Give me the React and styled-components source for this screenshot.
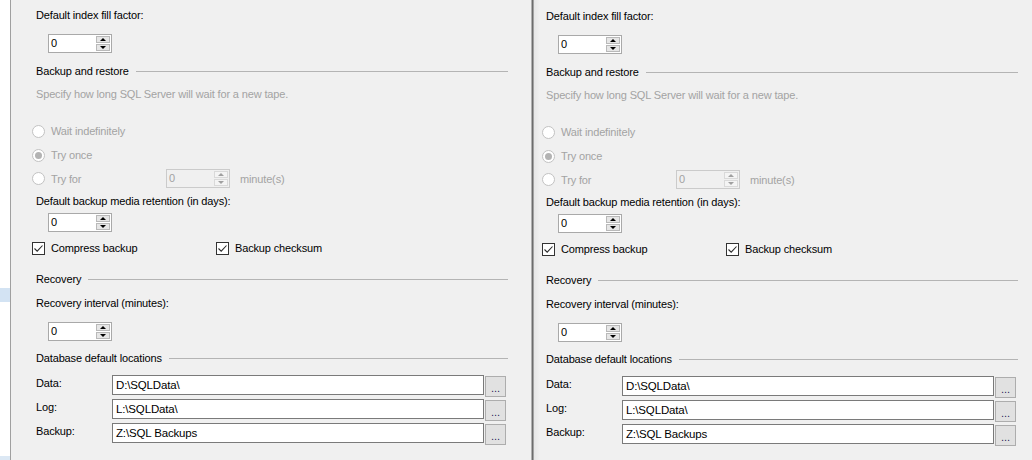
import React from 'react';
import styled, { createGlobalStyle } from 'styled-components';

const Global = createGlobalStyle`
  html, body { margin: 0; padding: 0; background: #f0f0f0; }
  body {
    width: 1032px; height: 460px; overflow: hidden;
    font-family: "Liberation Sans", Arial, sans-serif;
    font-size: 11px; letter-spacing: -0.15px; color: #000;
  }
`;

const Screen = styled.div`
  display: flex;
  width: 1032px;
  height: 460px;
  background: #f0f0f0;
  overflow: hidden;
`;

const LeftPane = styled.div`
  display: flex;
  width: 531px;
  flex: none;
`;

const TreeStrip = styled.div`
  width: 10px;
  flex: none;
  background: #ffffff;
  border-right: 1px solid #a0a0a0;
  display: flex;
  flex-direction: column;
  padding-top: 288px;
`;

const TreeHighlight = styled.div`
  height: ${(p) => p.$h}px;
  background: ${(p) => p.$c || '#d3e3f3'};
  margin-top: ${(p) => (p.$auto ? 'auto' : '0')};
`;

const Divider = styled.div`
  width: 3px;
  flex: none;
  background: linear-gradient(to right, #b0b0b0 0 1px, #6c6c6c 1px 2px, #a2a2a2 2px 3px);
`;

const RightPane = styled.div`
  flex: 1;
  background: linear-gradient(to right, #e6e6e6 0, #f0f0f0 6px);
`;

const Options = styled.div`
  display: flex;
  flex-direction: column;
  width: 472px;
  padding-top: ${(p) => p.$top}px;
  padding-left: ${(p) => p.$left}px;
`;

const Label = styled.div`
  height: 14px;
  line-height: 14px;
  margin-top: ${(p) => p.$mt || 0}px;
  color: ${(p) => (p.$disabled ? '#a3a3a3' : '#000')};
  white-space: nowrap;
`;

const GroupHeader = styled.div`
  display: flex;
  align-items: center;
  gap: 7px;
  height: 14px;
  line-height: 14px;
  margin-top: ${(p) => p.$mt || 0}px;
  white-space: nowrap;
  &::after {
    content: '';
    flex: 1;
    height: 1px;
    background: #b4b4b4;
  }
`;

const SpinRow = styled.div`
  display: flex;
  margin-top: ${(p) => p.$mt || 0}px;
  padding-left: 12px;
`;

const SpinBox = styled.div`
  display: flex;
  width: 64px;
  height: 19px;
  box-sizing: border-box;
  border: 1px solid ${(p) => (p.$disabled ? '#cbcbcb' : '#a9a9a9')};
  background: ${(p) => (p.$disabled ? '#f0f0f0' : '#ffffff')};
  flex: none;
`;

const SpinValue = styled.div`
  flex: 1;
  padding-left: 2px;
  line-height: 17px;
  color: ${(p) => (p.$disabled ? '#a3a3a3' : '#000')};
`;

const SpinButtons = styled.div`
  width: 14px;
  margin: 1px;
  display: flex;
  flex-direction: column;
  gap: 1px;
`;

const SpinBtn = styled.div`
  flex: 1;
  display: flex;
  align-items: center;
  justify-content: center;
  background: ${(p) => (p.$disabled ? '#f4f4f4' : '#e6e6e6')};
  border: 1px solid ${(p) => (p.$disabled ? '#d9d9d9' : '#b9b9b9')};
  box-sizing: border-box;
`;

const Arrow = styled.span`
  width: 0;
  height: 0;
  border-left: 3px solid transparent;
  border-right: 3px solid transparent;
  ${(p) =>
    p.$up
      ? `border-bottom: 3px solid ${p.$disabled ? '#a0a0a0' : '#000'};`
      : `border-top: 3px solid ${p.$disabled ? '#a0a0a0' : '#000'};`}
`;

const ChoiceRow = styled.div`
  display: flex;
  align-items: center;
  height: ${(p) => p.$h || 16}px;
  margin-top: ${(p) => p.$mt || 0}px;
  margin-left: -4px;
  white-space: nowrap;
`;

const Choice = styled.div`
  display: flex;
  align-items: center;
  width: ${(p) => (p.$w ? `${p.$w}px` : 'auto')};
  flex: none;
  color: ${(p) => (p.$disabled ? '#a3a3a3' : '#000')};
`;

const RadioCircle = styled.span`
  width: 13px;
  height: 13px;
  box-sizing: border-box;
  border-radius: 50%;
  border: 1px solid #c2c2c2;
  background: #ffffff;
  margin-right: 6px;
  display: flex;
  align-items: center;
  justify-content: center;
  &::after {
    content: '';
    display: ${(p) => (p.$checked ? 'block' : 'none')};
    width: 7px;
    height: 7px;
    border-radius: 50%;
    background: #b3b3b3;
  }
`;

const CheckSquare = styled.span`
  width: 13px;
  height: 13px;
  box-sizing: border-box;
  border: 1px solid #333333;
  background: #ffffff;
  margin-right: 6px;
  display: flex;
  align-items: center;
  justify-content: center;
`;

const Suffix = styled.span`
  margin-left: 10px;
  color: #a3a3a3;
`;

const PathList = styled.div`
  display: flex;
  flex-direction: column;
  gap: 3px;
  margin-top: 10px;
`;

const PathRow = styled.div`
  display: flex;
  height: 21px;
`;

const PathLabel = styled.div`
  width: 76px;
  flex: none;
  line-height: 14px;
  padding-top: 1px;
`;

const PathBox = styled.div`
  width: 372px;
  height: 20px;
  box-sizing: border-box;
  border: 1px solid #7a7a7a;
  background: #ffffff;
  padding-left: 3px;
  line-height: 18px;
  font-size: 11.5px;
`;

const BrowseButton = styled.div`
  width: 21px;
  height: 21px;
  box-sizing: border-box;
  margin-left: 1px;
  margin-top: 1px;
  border: 1px solid #adadad;
  background: #e1e1e1;
  color: #2d1a5e;
  text-align: center;
  line-height: 22px;
  font-size: 11px;
  letter-spacing: 0;
`;

function Spinner({ value, disabled }) {
  return (
    <SpinBox $disabled={disabled}>
      <SpinValue $disabled={disabled}>{value}</SpinValue>
      <SpinButtons>
        <SpinBtn $disabled={disabled}>
          <Arrow $up $disabled={disabled} />
        </SpinBtn>
        <SpinBtn $disabled={disabled}>
          <Arrow $disabled={disabled} />
        </SpinBtn>
      </SpinButtons>
    </SpinBox>
  );
}

function Check() {
  return (
    <CheckSquare>
      <svg width="11" height="11" viewBox="0 0 11 11">
        <path d="M1.5 5.5 L4.2 8.2 L9.5 2.5" fill="none" stroke="#2b2b2b" strokeWidth="1.1" />
      </svg>
    </CheckSquare>
  );
}

const paths = [
  ['Data:', 'D:\\SQLData\\'],
  ['Log:', 'L:\\SQLData\\'],
  ['Backup:', 'Z:\\SQL Backups'],
];

function ServerOptions({ top, left }) {
  return (
    <Options $top={top} $left={left}>
      <Label>Default index fill factor:</Label>
      <SpinRow $mt={12}>
        <Spinner value="0" />
      </SpinRow>
      <GroupHeader $mt={11}>Backup and restore</GroupHeader>
      <Label $mt={9} $disabled>Specify how long SQL Server will wait for a new tape.</Label>
      <ChoiceRow $mt={22}>
        <Choice $disabled>
          <RadioCircle />
          Wait indefinitely
        </Choice>
      </ChoiceRow>
      <ChoiceRow $mt={8}>
        <Choice $disabled>
          <RadioCircle $checked />
          Try once
        </Choice>
      </ChoiceRow>
      <ChoiceRow $mt={6} $h={19}>
        <Choice $disabled $w={134}>
          <RadioCircle />
          Try for
        </Choice>
        <Spinner value="0" disabled />
        <Suffix>minute(s)</Suffix>
      </ChoiceRow>
      <Label $mt={6}>Default backup media retention (in days):</Label>
      <SpinRow $mt={5}>
        <Spinner value="0" />
      </SpinRow>
      <ChoiceRow $mt={8}>
        <Choice $w={184}>
          <Check />
          Compress backup
        </Choice>
        <Choice>
          <Check />
          Backup checksum
        </Choice>
      </ChoiceRow>
      <GroupHeader $mt={16}>Recovery</GroupHeader>
      <Label $mt={10}>Recovery interval (minutes):</Label>
      <SpinRow $mt={12}>
        <Spinner value="0" />
      </SpinRow>
      <GroupHeader $mt={10}>Database default locations</GroupHeader>
      <PathList>
        {paths.map(([label, value]) => (
          <PathRow key={label}>
            <PathLabel>{label}</PathLabel>
            <PathBox>{value}</PathBox>
            <BrowseButton>...</BrowseButton>
          </PathRow>
        ))}
      </PathList>
    </Options>
  );
}

export default function App() {
  return (
    <>
      <Global />
      <Screen>
        <LeftPane>
          <TreeStrip>
            <TreeHighlight $h={14} />
            <TreeHighlight $h={4} $auto $c="#dce8f4" />
          </TreeStrip>
          <ServerOptions top={8} left={25} />
        </LeftPane>
        <Divider />
        <RightPane>
          <ServerOptions top={9} left={12} />
        </RightPane>
      </Screen>
    </>
  );
}
